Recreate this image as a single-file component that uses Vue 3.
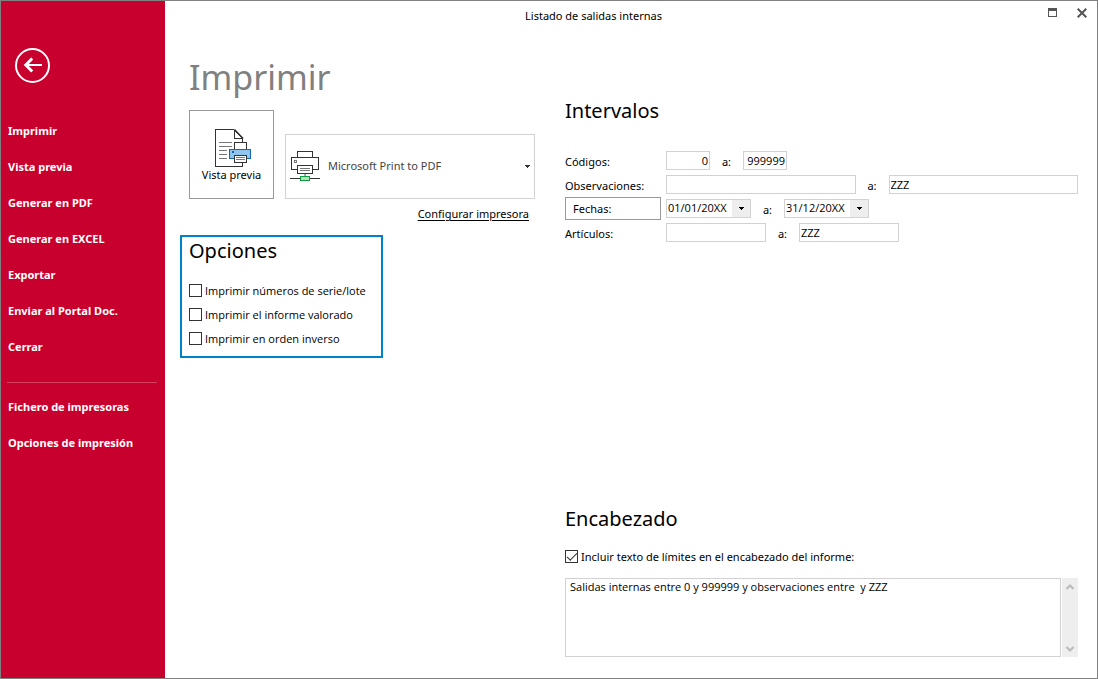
<script setup>
import { ref } from 'vue'

const actions = ['Imprimir', 'Vista previa', 'Generar en PDF', 'Generar en EXCEL', 'Exportar', 'Enviar al Portal Doc.', 'Cerrar']
const settings = ['Fichero de impresoras', 'Opciones de impresión']

const options = ref([
  { id: 'serial', label: 'Imprimir números de serie/lote', checked: false },
  { id: 'valued', label: 'Imprimir el informe valorado', checked: false },
  { id: 'reverse', label: 'Imprimir en orden inverso', checked: false },
])

const printer = ref('Microsoft Print to PDF')
const codeFrom = ref('0')
const codeTo = ref('999999')
const notesFrom = ref('')
const notesTo = ref('ZZZ')
const dateFrom = ref('01/01/20XX')
const dateTo = ref('31/12/20XX')
const itemFrom = ref('')
const itemTo = ref('ZZZ')
const includeLimits = ref(true)
const headerText = ref('Salidas internas entre 0 y 999999 y observaciones entre  y ZZZ')
</script>

<template>
  <div class="window">
    <aside class="sidebar">
      <button class="back" type="button" aria-label="Volver">
        <svg width="35" height="35" viewBox="0 0 35 35" fill="none" stroke="#fff">
          <circle cx="17.5" cy="17.5" r="16.5" stroke-width="2" />
          <path d="M27 17H10.5" stroke-width="2" />
          <path d="M17.200 10.500L10.800 17l6.400 6.500" stroke-width="3" />
        </svg>
      </button>
      <nav>
        <ul class="menu">
          <li v-for="item in actions" :key="item"><a href="#">{{ item }}</a></li>
        </ul>
        <hr class="divider" />
        <ul class="menu">
          <li v-for="item in settings" :key="item"><a href="#">{{ item }}</a></li>
        </ul>
      </nav>
    </aside>

    <div class="main">
      <header class="titlebar">
        <span class="window-title">Listado de salidas internas</span>
        <div class="window-controls">
          <button type="button" aria-label="Maximizar">
            <svg width="9" height="9" viewBox="0 0 9 9" shape-rendering="crispEdges">
              <path d="M0 0h9v9H0zM1 3v5h7V3z" fill="#555" fill-rule="evenodd" />
            </svg>
          </button>
          <button type="button" aria-label="Cerrar ventana">
            <svg width="10" height="10" viewBox="0 0 10 10" fill="none" stroke="#555" stroke-width="2">
              <path d="M.7.7l8.600 8.600M9.300.7L.7 9.300" />
            </svg>
          </button>
        </div>
      </header>

      <main class="content">
        <section class="left">
          <h1>Imprimir</h1>
          <div class="print-row">
            <button class="preview" type="button">
              <svg width="37" height="38" viewBox="0 0 37 38" fill="none" shape-rendering="crispEdges">
                <path d="M.5.5H19l9 9v28H.5z" fill="#fff" />
                <path d="M27.500 14V9.500L18.500.5H.5v37h27V33" stroke="#333" />
                <path d="M19.500.5v9H28" stroke="#333" />
                <path d="M19.500.5l8.500 9" stroke="#333" stroke-width="1.500" shape-rendering="auto" />
                <path d="M4 13.500h13M4 17.500h13M4 21.500h8M4 25.500h8M4 29.500h8" stroke="#777" />
                <path d="M19.500 20v-6.500h12V20" fill="#fff" stroke="#333" />
                <path d="M14.500 20.500h21v9h-21z" fill="#92c5ee" stroke="#0f67b5" />
                <path d="M17 22h2v2h-2z" fill="#0f67b5" />
                <path d="M19.500 26.500h12v7h-12z" fill="#fff" stroke="#333" />
                <path d="M21 28.500h9M21 30.500h9" stroke="#777" />
              </svg>
              <span>Vista previa</span>
            </button>
            <div class="printer">
              <select v-model="printer" aria-label="Impresora">
                <option>Microsoft Print to PDF</option>
              </select>
              <svg class="printer-icon" width="30" height="31" viewBox="0 0 30 31" fill="none" shape-rendering="crispEdges">
                <path d="M7.500 7V.5h15V7" stroke="#333" />
                <path d="M7 18.500H1.500v-12h27v12H23" stroke="#333" />
                <path d="M4.500 9.500h2v2h-2z" stroke="#777" />
                <path d="M7.500 14.500h15v8h-15z" fill="#fff" stroke="#333" />
                <path d="M10 17.500h10M10 19.500h10" stroke="#777" />
                <path d="M15 23v3" stroke="#aaa" stroke-width="2" />
                <path d="M0 27.500h10M20 27.500h10" stroke="#333" />
                <path d="M10.500 25.500h9v4h-9z" fill="#b5dfb8" stroke="#109a43" />
              </svg>
              <svg class="arrow" width="5" height="3" viewBox="0 0 5 3" shape-rendering="crispEdges">
                <path d="M0 0h5v1H4v1H3v1H2V2H1V1H0z" fill="#333" />
              </svg>
            </div>
          </div>
          <a class="configure" href="#">Configurar impresora</a>

          <section class="options">
            <h2>Opciones</h2>
            <label v-for="opt in options" :key="opt.id" class="check">
              <input v-model="opt.checked" type="checkbox" />
              <span>{{ opt.label }}</span>
            </label>
          </section>
        </section>

        <section class="right">
          <h2>Intervalos</h2>
          <div class="ranges">
            <div class="range">
              <label class="name" for="code-from">Códigos:</label>
              <input id="code-from" v-model="codeFrom" class="field code" type="text" />
              <label class="to" for="code-to">a:</label>
              <input id="code-to" v-model="codeTo" class="field code" type="text" />
            </div>
            <div class="range">
              <label class="name" for="notes-from">Observaciones:</label>
              <input id="notes-from" v-model="notesFrom" class="field wide" type="text" />
              <label class="to" for="notes-to">a:</label>
              <input id="notes-to" v-model="notesTo" class="field wide" type="text" />
            </div>
            <div class="range">
              <button class="dates" type="button">Fechas:</button>
              <span class="date">
                <select id="date-from" v-model="dateFrom" class="field" aria-label="Fecha inicial">
                  <option>01/01/20XX</option>
                </select>
                <span class="date-arrow">
                  <svg width="5" height="3" viewBox="0 0 5 3" shape-rendering="crispEdges">
                    <path d="M0 0h5v1H4v1H3v1H2V2H1V1H0z" />
                  </svg>
                </span>
              </span>
              <label class="to" for="date-to">a:</label>
              <span class="date">
                <select id="date-to" v-model="dateTo" class="field">
                  <option>31/12/20XX</option>
                </select>
                <span class="date-arrow">
                  <svg width="5" height="3" viewBox="0 0 5 3" shape-rendering="crispEdges">
                    <path d="M0 0h5v1H4v1H3v1H2V2H1V1H0z" />
                  </svg>
                </span>
              </span>
            </div>
            <div class="range">
              <label class="name" for="item-from">Artículos:</label>
              <input id="item-from" v-model="itemFrom" class="field item" type="text" />
              <label class="to" for="item-to">a:</label>
              <input id="item-to" v-model="itemTo" class="field item" type="text" />
            </div>
          </div>

          <section class="heading">
            <h2>Encabezado</h2>
            <label class="check">
              <input v-model="includeLimits" type="checkbox" />
              <span>Incluir texto de límites en el encabezado del informe:</span>
            </label>
            <div class="memo">
              <textarea v-model="headerText" aria-label="Texto del encabezado"></textarea>
              <div class="scroll">
                <button type="button" aria-label="Subir">
                  <svg width="8" height="6" viewBox="0 0 8 6" fill="none" stroke="#bbb" stroke-width="2"><path d="M.5 5L4 1.500 7.500 5" /></svg>
                </button>
                <button type="button" aria-label="Bajar">
                  <svg width="8" height="6" viewBox="0 0 8 6" fill="none" stroke="#bbb" stroke-width="2"><path d="M.5 1L4 4.500 7.500 1" /></svg>
                </button>
              </div>
            </div>
          </section>
        </section>
      </main>
    </div>
  </div>
</template>

<style>
body {
  margin: 0;
}
</style>

<style scoped>
.window,
.window * {
  box-sizing: border-box;
}
.window {
  display: flex;
  min-height: 100vh;
  border: 1px solid #808080;
  background: #fff;
  color: #000;
  font-family: "Noto Sans", "Open Sans", sans-serif;
  font-size: 11px;
  line-height: 16px;
}
button,
input,
select,
textarea {
  margin: 0;
  padding: 0;
  border: 0;
  border-radius: 0;
  background: none;
  color: inherit;
  font: inherit;
}
svg {
  display: block;
}
h1,
h2 {
  margin: 0;
  font-weight: 400;
}
h1 {
  color: #808080;
  font-size: 34px;
  line-height: 48px;
}
h2 {
  font-size: 20px;
  line-height: 28px;
}

.sidebar {
  flex: none;
  width: 164px;
  padding: 47px 8px 0 6px;
  background: #c8002d;
  color: #fff;
}
.back {
  display: block;
  margin: 0 0 30px 8px;
}
.menu {
  margin: 0;
  padding: 0;
  list-style: none;
}
.menu a {
  display: block;
  padding: 10px 1px;
  color: inherit;
  font-weight: 700;
  text-decoration: none;
}
.divider {
  height: 1px;
  margin: 17px 0 6px;
  border: 0;
  background: #d6405f;
}

.main {
  display: flex;
  flex: 1;
  flex-direction: column;
  min-width: 0;
}
.titlebar {
  display: flex;
  height: 24px;
  padding-top: 7px;
}
.window-title {
  flex: 1;
  text-align: center;
}
.window-controls {
  display: flex;
  gap: 20px;
  align-items: flex-start;
  width: 75px;
  padding-left: 26px;
}

.content {
  display: flex;
  flex: 1;
  gap: 30px;
  padding: 28px 19px 21px 24px;
}
.left {
  flex: none;
  width: 346px;
}
.print-row {
  display: flex;
  gap: 11px;
  align-items: flex-end;
  margin-top: 9px;
}
.preview {
  display: flex;
  flex-direction: column;
  align-items: center;
  width: 85px;
  height: 89px;
  padding-top: 18px;
  border: 1px solid #999;
}
.preview svg {
  margin-left: 4px;
}
.printer {
  display: grid;
  flex: 1;
  grid-template-columns: 42px 1fr 10px;
  align-items: center;
  height: 65px;
}
.printer select {
  grid-area: 1 / 1 / 2 / 4;
  width: 100%;
  height: 100%;
  padding: 0 0 2px 42px;
  border: 1px solid #d2d2d2;
  color: #444;
  appearance: none;
}
.printer-icon {
  grid-area: 1 / 1;
  margin-left: 5px;
  pointer-events: none;
}
.arrow {
  grid-area: 1 / 3;
  pointer-events: none;
}
.configure {
  display: block;
  width: fit-content;
  margin: 7px 6px 0 auto;
  color: #000;
  text-underline-offset: 2px;
}

.options {
  width: 203px;
  height: 123px;
  margin: 13px 0 0 -9px;
  padding: 0 7px;
  border: 2px solid #0082c8;
}
.options h2 {
  margin-bottom: 14px;
}
.check {
  display: flex;
  gap: 3px;
  align-items: center;
  height: 24px;
}
.options .check,
.field,
.memo textarea {
  font-family: "Open Sans", "Noto Sans", sans-serif;
}
.check input {
  display: grid;
  flex: none;
  width: 13px;
  height: 13px;
  margin-bottom: 1px;
  border: 1px solid #333;
  background: #fff;
  appearance: none;
}
.check input:checked::before {
  width: 9px;
  height: 4px;
  margin: 2px 0 0 1px;
  border: solid #333;
  border-width: 0 0 1px 1px;
  content: "";
  transform: rotate(-45deg);
}

.right {
  display: flex;
  flex: 1;
  flex-direction: column;
  min-width: 0;
  padding-top: 44px;
}
.ranges {
  display: grid;
  grid-auto-rows: 24px;
  margin-top: 24px;
}
.range {
  display: flex;
  align-items: center;
  padding-bottom: 1px;
}
.name,
.to {
  flex: none;
  padding-top: 3px;
}
.name {
  width: 101px;
}
.to {
  width: 33px;
  text-align: center;
}
.field {
  width: 100%;
  height: 19px;
  padding: 0 1px 1px;
  border: 1px solid #d2d2d2;
  background: #fff;
}
.code {
  width: 44px;
  text-align: right;
}
.wide {
  flex: 1;
  min-width: 0;
}
.item {
  width: 100px;
}
.dates {
  width: 96px;
  height: 23px;
  margin-right: 5px;
  padding-left: 7px;
  border: 1px solid #999;
  text-align: left;
}
.date {
  display: grid;
  grid-template-columns: 1fr 19px;
  width: 85px;
}
.date select {
  grid-area: 1 / 1 / 2 / 3;
  appearance: none;
}
.date-arrow {
  display: grid;
  grid-area: 1 / 2;
  place-items: center;
  margin: 1px 1px 1px 0;
  background: #eee;
  pointer-events: none;
}

.heading {
  margin-top: auto;
}
.heading .check {
  margin: 12px 0 9px;
}
.memo {
  display: flex;
  gap: 1px;
  height: 79px;
}
.memo textarea {
  flex: 1;
  min-width: 0;
  padding: 0 4px;
  border: 1px solid #d2d2d2;
  resize: none;
}
.scroll {
  display: flex;
  flex-direction: column;
  justify-content: space-between;
  width: 16px;
  padding: 6px 4px 5px;
  background: #eee;
}
</style>
